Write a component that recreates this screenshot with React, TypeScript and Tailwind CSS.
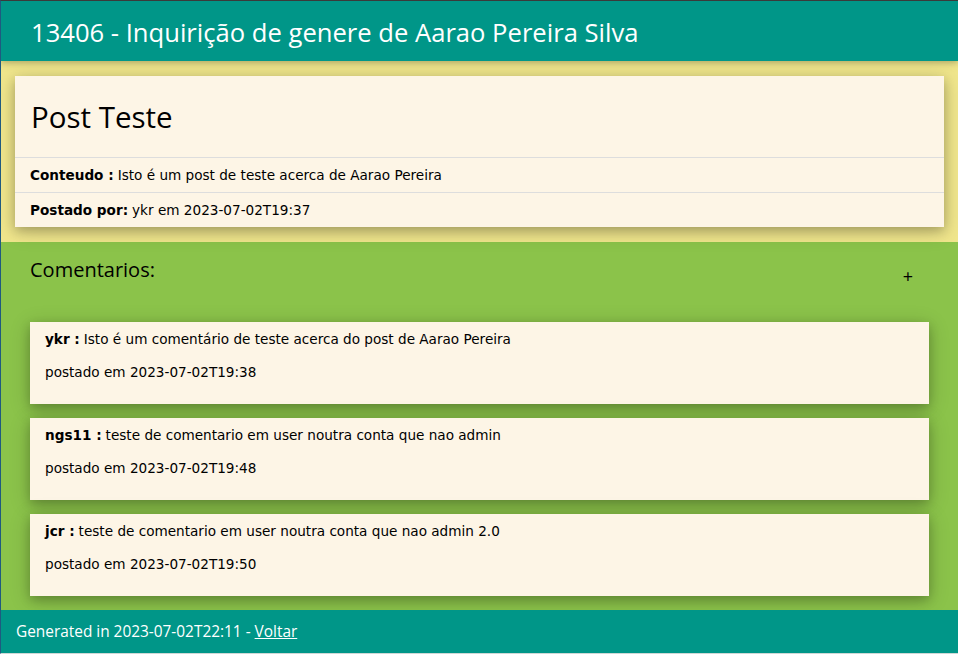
const comments = [
  { user: "ykr", text: "Isto é um comentário de teste acerca do post de Aarao Pereira", date: "2023-07-02T19:38" },
  { user: "ngs11", text: "teste de comentario em user noutra conta que nao admin", date: "2023-07-02T19:48" },
  { user: "jcr", text: "teste de comentario em user noutra conta que nao admin 2.0", date: "2023-07-02T19:50" },
];

const cardShadow = "shadow-[0_4px_10px_0_rgba(0,0,0,0.2),0_4px_20px_0_rgba(0,0,0,0.19)]";

export default function App() {
  return (
    <div className="w-[958px] h-[654px] overflow-hidden flex flex-col border-t border-t-[#3a3a3a] border-l border-l-[#1f5a80] border-b border-b-[#cfd8d6] bg-[#8bc34a] text-black font-['DejaVu_Sans',Verdana,sans-serif]">
      {/* Header */}
      <header className="relative z-20 h-[60px] shrink-0 bg-[#009688] flex items-center px-[30px] pt-[3px] shadow-[0_2px_5px_0_rgba(0,0,0,0.16),0_2px_10px_0_rgba(0,0,0,0.12)]">
        <h1 className="text-white text-[25.6px] font-['Open_Sans',sans-serif] leading-none">
          13406 - Inquirição de genere de Aarao Pereira Silva
        </h1>
      </header>

      {/* Post */}
      <section className="relative z-10 bg-[#f0e68c] px-[14px] py-[15px]">
        <div className={`bg-[#fdf5e6] ${cardShadow}`}>
          <div className="h-[81px] flex items-center px-[16px]">
            <h2 className="text-[29.5px] font-['Open_Sans',sans-serif] leading-none">Post Teste</h2>
          </div>
          <div className="h-[35px] flex items-center px-[15px] border-t border-[#ddd] text-[13.6px]">
            <span className="font-bold mr-[4px]">Conteudo :</span>
            <span>Isto é um post de teste acerca de Aarao Pereira</span>
          </div>
          <div className="h-[35px] flex items-center px-[15px] border-t border-[#ddd] text-[13.6px]">
            <span className="font-bold mr-[4px]">Postado por:</span>
            <span>ykr em 2023-07-02T19:37</span>
          </div>
        </div>
      </section>

      {/* Comments */}
      <section className="flex-1 bg-[#8bc34a] px-[29px]">
        <div className="flex justify-between items-start pt-[16px] h-[80px]">
          <h4 className="text-[20px] font-['Open_Sans',sans-serif] leading-[24px]">Comentarios:</h4>
          <button className="mt-[9px] mr-[16px] text-[18px] leading-none font-['Open_Sans',sans-serif]">+</button>
        </div>
        <div className="flex flex-col gap-[14px]">
          {comments.map((c) => (
            <div key={c.user} className={`h-[82px] bg-[#fdf5e6] px-[15px] pt-[7px] text-[13.6px] ${cardShadow}`}>
              <div className="h-[20px] flex items-center">
                <span className="font-bold mr-[4px]">{c.user} :</span>
                <span>{c.text}</span>
              </div>
              <div className="h-[20px] mt-[13px] flex items-center">postado em {c.date}</div>
            </div>
          ))}
        </div>
      </section>

      {/* Footer */}
      <footer className="h-[43px] shrink-0 bg-[#009688] flex items-center px-[15px] pt-[1px] text-white text-[15.4px] font-['Open_Sans',sans-serif]">
        Generated in 2023-07-02T22:11 -&nbsp;<a href="#" className="underline">Voltar</a>
      </footer>
    </div>
  );
}
